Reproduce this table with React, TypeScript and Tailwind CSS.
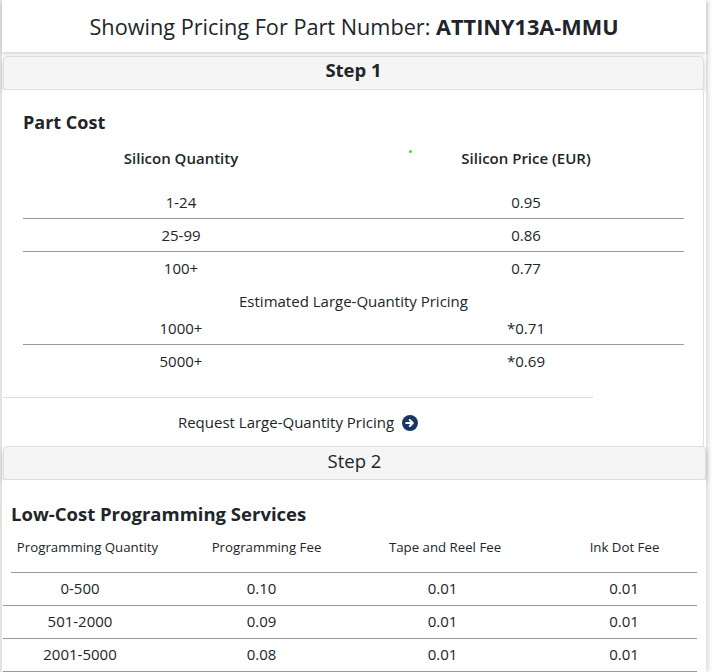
import React from "react";

const font = { fontFamily: '"Open Sans", "Noto Sans", sans-serif' };

const siliconRows = [
  { q: "1-24", p: "0.95", border: true },
  { q: "25-99", p: "0.86", border: true },
  { q: "100+", p: "0.77", border: false },
];

const progRows = [
  ["0-500", "0.10", "0.01", "0.01"],
  ["501-2000", "0.09", "0.01", "0.01"],
  ["2001-5000", "0.08", "0.01", "0.01"],
];

function ArrowCircle() {
  return (
    <svg width="16" height="16" viewBox="0 0 16 16" className="ml-[8px]">
      <circle cx="8" cy="8" r="8" fill="#1b3564" />
      <path d="M4.2 8h6.4M7.8 5l3 3-3 3" stroke="#fff" strokeWidth="2" fill="none" strokeLinecap="round" strokeLinejoin="round" />
    </svg>
  );
}

export default function App() {
  return (
    <div className="w-[717px] h-[672px] overflow-hidden bg-white text-[#212529]" style={font}>
      <div className="w-[706px] min-h-[672px] border-l-2 border-[#e2e2e2] bg-white shadow-[3px_0_4px_rgba(0,0,0,0.12)]">
        {/* Title */}
        <div className="h-[52px] pt-[3px] rounded-t-[4px] bg-white shadow-[0_2px_4px_rgba(0,0,0,0.18)] flex items-center justify-center text-[21.7px]">
          <span>Showing Pricing For Part Number:&nbsp;</span>
          <span className="font-bold">ATTINY13A-MMU</span>
        </div>

        <div className="h-[4px]" />

        {/* Step 1 header */}
        <div className="ml-[1px] w-[701px] h-[34px] pb-[6px] rounded-[4px] border border-[#dedede] bg-[#f5f5f5] shadow-[0_3px_5px_rgba(0,0,0,0.2)] flex items-center justify-center text-[18.5px] font-bold">
          Step 1
        </div>

        {/* Step 1 panel */}
        <div className="ml-[1px] w-[701px] h-[356px] border-r border-[#e0e0e0] bg-white">
          <div className="pl-[20px] pt-[20px] text-[18px] font-bold leading-[24px]">Part Cost</div>
          <div className="ml-[20px] w-[661px]">
            <div className="relative grid grid-cols-[316px_1fr] h-[52px] pt-[14px] text-[15px] font-semibold leading-[20px]">
              <div className="text-center">Silicon Quantity</div>
              <div className="text-center pl-[29px]">Silicon Price (EUR)</div>
              <span className="absolute left-[386px] top-[16px] w-[3px] h-[3px] rounded-full bg-[#2ee62e]" />
            </div>
            {siliconRows.map((r) => (
              <div
                key={r.q}
                className={`grid grid-cols-[316px_1fr] h-[33px] items-center text-[15px] ${r.border ? "border-b border-[#9a9a9a]" : ""}`}
              >
                <div className="text-center">{r.q}</div>
                <div className="text-center pl-[29px]">{r.p}</div>
              </div>
            ))}
            <div className="h-[26px] pt-[6px] text-[15px] leading-[20px] text-center">Estimated Large-Quantity Pricing</div>
            <div className="grid grid-cols-[316px_1fr] h-[34px] pt-[2px] items-center text-[15px] border-b border-[#9a9a9a]">
              <div className="text-center">1000+</div>
              <div className="text-center pl-[29px]">*0.71</div>
            </div>
            <div className="grid grid-cols-[316px_1fr] h-[33px] items-center text-[15px]">
              <div className="text-center">5000+</div>
              <div className="text-center pl-[29px]">*0.69</div>
            </div>
          </div>
          <div className="mt-[19px] w-[590px] border-t border-[#dcdcdc] h-[48px] pt-[2px] flex items-center justify-center text-[15px]">
            <span>Request Large-Quantity Pricing</span>
            <ArrowCircle />
          </div>
        </div>

        {/* Step 2 header */}
        <div className="ml-[1px] w-[703px] h-[34px] pb-[4px] rounded-[4px] border border-[#dedede] bg-[#f5f5f5] shadow-[0_3px_5px_rgba(0,0,0,0.2)] flex items-center justify-center text-[18.5px]">
          Step 2
        </div>

        {/* Step 2 panel */}
        <div className="bg-white">
          <div className="pl-[9px] pt-[22px] text-[18.5px] font-bold leading-[24px]">Low-Cost Programming Services</div>
          <div className="ml-[9px] w-[686px] h-[47px] border-b border-[#9a9a9a] pt-[11px] text-[13.25px] font-medium leading-[20px]">
            <div className="grid grid-cols-[153px_205px_152px_207px]">
              <div className="text-center">Programming Quantity</div>
              <div className="text-center">Programming Fee</div>
              <div className="text-center">Tape and Reel Fee</div>
              <div className="text-center">Ink Dot Fee</div>
            </div>
          </div>
          {progRows.map((r) => (
            <div key={r[0]} className="ml-[1px] w-[694px] h-[33px] pb-[1px] border-b border-[#9a9a9a] text-[15px]">
              <div className="grid grid-cols-[154px_209px_153px_210px] h-full items-center">
                {r.map((c, i) => (
                  <div key={i} className="text-center">
                    {c}
                  </div>
                ))}
              </div>
            </div>
          ))}
        </div>
      </div>
    </div>
  );
}
